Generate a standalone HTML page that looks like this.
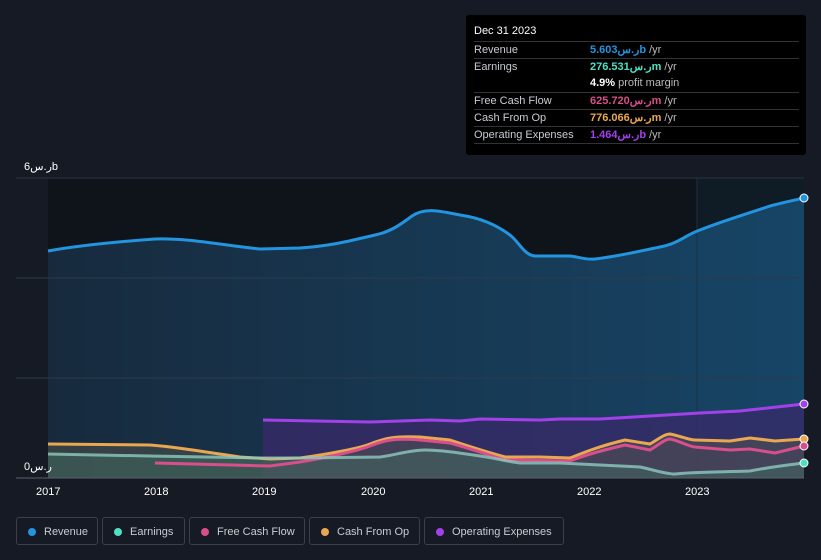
<!DOCTYPE html>
<html><head><style>
body{margin:0;background:#151a24;width:821px;height:560px;overflow:hidden;font-family:"Liberation Sans","Noto Sans CJK SC",sans-serif;position:relative}
.tt{position:absolute;left:466px;top:15px;width:340px;height:140px;background:#000;border-radius:3px;color:#c8ccd2;font-size:11px}
.tt .h{position:absolute;left:8px;top:10px;color:#fff;font-size:11px}
.row{position:absolute;left:8px;width:325px;height:17px;border-top:1px solid #333;line-height:17px}
.row span{position:absolute;left:116px;font-weight:bold}
.row i{font-style:normal;color:#bbb;font-weight:normal}
.lg{position:absolute;top:517px;height:28px;border:1px solid #3a404c;border-radius:3px;color:#c8ccd2;font-size:11px;line-height:28px;box-sizing:border-box;padding-left:27px}
.lg b{position:absolute;left:11px;top:10px;width:8px;height:8px;border-radius:50%}
.ax{position:absolute;top:486px;color:#fff;font-size:11px}
</style></head><body>
<svg width="821" height="560" style="position:absolute;left:0;top:0">
<defs><linearGradient id="rg" x1="0" y1="0" x2="1" y2="0"><stop offset="0" stop-color="#172a3d"/><stop offset="1" stop-color="#174566"/></linearGradient></defs>
<rect x="48" y="178" width="756" height="300" fill="#0f131a"/>
<rect x="697" y="178" width="107" height="300" fill="#0f1c26"/>
<line x1="16" y1="178" x2="804" y2="178" stroke="#2c3340"/>
<path d="M48,251 C70,247 100,243 155,239 C190,238 220,245 260,249 L300,248 C330,246 345,242 375,235 C390,232 400,225 412,216 C425,207 440,211 460,215 C480,218 495,224 510,235 C520,243 524,255 535,256 L570,256 C580,257 585,260 595,259 C620,256 640,251 660,247 C680,243 685,235 700,230 C720,222 740,216 770,206 C785,202 795,200 804,198 L804,478 L48,478Z" fill="url(#rg)"/>
<line x1="16" y1="278" x2="804" y2="278" stroke="#2c3a4a"/>
<line x1="16" y1="378" x2="804" y2="378" stroke="#2c3a4a"/>
<line x1="697" y1="178" x2="697" y2="478" stroke="#1f3040"/>
<path d="M48,251 C70,247 100,243 155,239 C190,238 220,245 260,249 L300,248 C330,246 345,242 375,235 C390,232 400,225 412,216 C425,207 440,211 460,215 C480,218 495,224 510,235 C520,243 524,255 535,256 L570,256 C580,257 585,260 595,259 C620,256 640,251 660,247 C680,243 685,235 700,230 C720,222 740,216 770,206 C785,202 795,200 804,198" fill="none" stroke="#2394df" stroke-width="3"/>
<path d="M263,420 L370,422 L430,420 L460,421 L480,419 L540,420 L560,419 L600,419 L650,416 L700,413 L740,411 L804,404 L804,478 L263,478Z" fill="#3a2a6a" opacity="0.75"/>
<path d="M263,420 L370,422 L430,420 L460,421 L480,419 L540,420 L560,419 L600,419 L650,416 L700,413 L740,411 L804,404" fill="none" stroke="#a241ea" stroke-width="3"/>
<path d="M48,444 L150,445 C175,447 200,451 240,457 L270,459 L300,458 C330,454 360,448 370,444 C385,438 395,436 420,437 L450,440 C465,445 480,450 505,457 L540,457 L570,458 C585,452 600,446 625,440 L650,444 C660,438 665,434 670,434 C680,436 690,440 695,440 L730,441 L750,438 L775,441 L804,439 L804,478 L48,478Z" fill="#5a5a4a" opacity="0.45"/>
<path d="M48,454 L150,456 L260,458 L300,458 L380,457 C395,455 410,450 425,450 C440,450 460,453 480,456 C495,458 505,461 520,463 L560,463 L600,465 L640,467 C655,470 665,474 675,474 C690,472 720,472 750,471 C760,469 770,467 804,463 L804,478 L48,478Z" fill="#3f6a5f" opacity="0.5"/>
<path d="M48,444 L150,445 C175,447 200,451 240,457 L270,459 L300,458 C330,454 360,448 370,444 C385,438 395,436 420,437 L450,440 C465,445 480,450 505,457 L540,457 L570,458 C585,452 600,446 625,440 L650,444 C660,438 665,434 670,434 C680,436 690,440 695,440 L730,441 L750,438 L775,441 L804,439" fill="none" stroke="#e9a752" stroke-width="3"/>
<path d="M155,463 L270,466 L300,462 C330,457 360,450 370,446 C385,440 395,438 420,440 L450,443 C465,447 480,452 505,460 L570,461 C585,455 600,451 625,445 L650,450 C660,444 665,439 670,439 C680,441 690,447 695,447 L730,450 L750,449 L775,453 L804,446" fill="none" stroke="#d84f8b" stroke-width="3"/>
<path d="M48,454 L150,456 L260,458 L300,458 L380,457 C395,455 410,450 425,450 C440,450 460,453 480,456 C495,458 505,461 520,463 L560,463 L600,465 L640,467 C655,470 665,474 675,474 C690,472 720,472 750,471 C760,469 770,467 804,463" fill="none" stroke="#8fc9c0" stroke-width="3" opacity="0.8"/>
<line x1="16" y1="478" x2="804" y2="478" stroke="#5a606c"/>
<circle cx="804" cy="198" r="4" fill="#2394df" stroke="#fff" stroke-width="1"/>
<circle cx="804" cy="404" r="4" fill="#a241ea" stroke="#fff" stroke-width="1"/>
<circle cx="804" cy="439" r="4" fill="#e9a752" stroke="#fff" stroke-width="1"/>
<circle cx="804" cy="446" r="4" fill="#d84f8b" stroke="#fff" stroke-width="1"/>
<circle cx="804" cy="463" r="4" fill="#4fe0c4" stroke="#fff" stroke-width="1"/>
<text x="24" y="170" fill="#fff" font-size="11" font-family="Liberation Sans,sans-serif">6ر.سb</text>
<text x="24" y="470" fill="#fff" font-size="11" font-family="Liberation Sans,sans-serif">0ر.س</text>
</svg>
<div class="ax" style="left:36px">2017</div><div class="ax" style="left:144px">2018</div><div class="ax" style="left:252px">2019</div><div class="ax" style="left:361px">2020</div><div class="ax" style="left:469px">2021</div><div class="ax" style="left:577px">2022</div><div class="ax" style="left:685px">2023</div>
<div class="tt"><div class="h">Dec 31 2023</div>
<div class="row" style="top:26px">Revenue<span style="color:#2394df">5.603ر.سb <i>/yr</i></span></div>
<div class="row" style="top:43px">Earnings<span style="color:#4fe0c4">276.531ر.سm <i>/yr</i></span></div>
<div class="row" style="top:60px;border-top:none"><span style="color:#fff">4.9% <i>profit margin</i></span></div>
<div class="row" style="top:77px">Free Cash Flow<span style="color:#d84f8b">625.720ر.سm <i>/yr</i></span></div>
<div class="row" style="top:94px">Cash From Op<span style="color:#e9a752">776.066ر.سm <i>/yr</i></span></div>
<div class="row" style="top:111px">Operating Expenses<span style="color:#a241ea">1.464ر.سb <i>/yr</i></span></div>
<div class="row" style="top:128px;height:0"></div>
</div>
<div class="lg" style="left:16px;width:82px"><b style="background:#2394df"></b>Revenue</div>
<div class="lg" style="left:102px;width:83px"><b style="background:#4fe0c4"></b>Earnings</div>
<div class="lg" style="left:189px;width:116px"><b style="background:#d84f8b"></b>Free Cash Flow</div>
<div class="lg" style="left:309px;width:111px"><b style="background:#e9a752"></b>Cash From Op</div>
<div class="lg" style="left:424px;width:140px"><b style="background:#a241ea"></b>Operating Expenses</div>
</body></html>
